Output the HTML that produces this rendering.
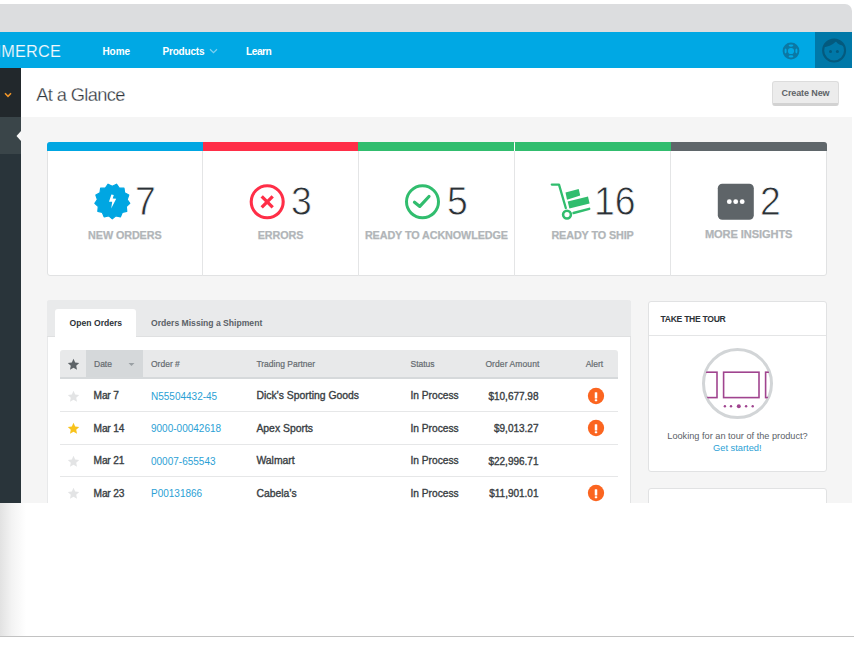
<!DOCTYPE html>
<html><head><meta charset="utf-8"><style>
html,body{margin:0;padding:0;background:#fff;}
body{width:854px;height:653px;position:relative;overflow:hidden;font-family:"Liberation Sans", sans-serif;}
</style></head><body>
<div style="position:absolute;left:0px;top:4px;width:852px;height:28px;background:#dcdddf;border-top-right-radius:7px;"></div>
<div style="position:absolute;left:0px;top:32px;width:852px;height:36px;background:#00a8e4;"></div>
<div style="position:absolute;left:815px;top:32px;width:37px;height:36px;background:#0078a8;"></div>
<div class="m" style="position:absolute;right:793px;text-align:right;top:42.90px;font-size:16.3px;line-height:16.3px;font-weight:400;color:#f0f9fd;white-space:nowrap;-webkit-text-stroke:0.15px #00a8e4;letter-spacing:0.2px;">COMMERCE</div>
<div class="m" style="position:absolute;left:102.5px;top:46.53px;font-size:10px;line-height:10px;font-weight:700;color:#ffffff;white-space:nowrap;letter-spacing:-0.1px;">Home</div>
<div class="m" style="position:absolute;left:162.5px;top:46.53px;font-size:10px;line-height:10px;font-weight:700;color:#ffffff;white-space:nowrap;letter-spacing:-0.2px;">Products</div>
<svg style="position:absolute;left:209px;top:48px" width="9" height="6" viewBox="0 0 9 6"><path d="M1 1.2 L4.5 4.6 L8 1.2" fill="none" stroke="#7fd0f0" stroke-width="1.2"/></svg>
<div class="m" style="position:absolute;left:246px;top:46.87px;font-size:10.2px;line-height:10.2px;font-weight:700;color:#ffffff;white-space:nowrap;letter-spacing:-0.5px;">Learn</div>
<svg style="position:absolute;left:781px;top:41px" width="20" height="20" viewBox="0 0 20 20"><circle cx="10" cy="10" r="8.4" fill="#0b78a4"/><circle cx="10" cy="10" r="3.1" fill="#00a8e4"/><g fill="#00a8e4"><ellipse cx="10" cy="4.6" rx="2.4" ry="1.05"/><ellipse cx="10" cy="15.4" rx="2.4" ry="1.05"/><ellipse cx="4.6" cy="10" rx="1.05" ry="2.4"/><ellipse cx="15.4" cy="10" rx="1.05" ry="2.4"/></g></svg>
<svg style="position:absolute;left:820px;top:37px" width="28" height="28" viewBox="0 0 28 28"><defs><clipPath id="av"><circle cx="14.1" cy="13.6" r="11"/></clipPath></defs><path d="M0 10.5 L2.6 10.5 C7 10 12 8.5 16 4.6 C18 7.5 21 9 26 9 L28 0 L0 0 Z" fill="#045a7e" clip-path="url(#av)"/><circle cx="14.1" cy="13.6" r="10.95" fill="none" stroke="#045a7e" stroke-width="2.1"/><circle cx="10.5" cy="14.4" r="1.5" fill="#045a7e"/><circle cx="17.4" cy="14.4" r="1.5" fill="#045a7e"/></svg>
<div style="position:absolute;left:0px;top:68px;width:20.5px;height:49px;background:#22282c;"></div>
<div style="position:absolute;left:0px;top:117px;width:20.5px;height:37px;background:#3a4549;"></div>
<div style="position:absolute;left:0px;top:154px;width:20.5px;height:349px;background:#29343a;"></div>
<svg style="position:absolute;left:4px;top:92px" width="8" height="6" viewBox="0 0 8 6"><path d="M1 1.3 L4 4.3 L7 1.3" fill="none" stroke="#f0962a" stroke-width="1.6"/></svg>
<svg style="position:absolute;left:15.5px;top:130.5px" width="5" height="10" viewBox="0 0 5 10"><path d="M5 0 L0.5 5 L5 10 Z" fill="#f8f8f8"/></svg>
<div style="position:absolute;left:20.5px;top:68px;width:831.5px;height:49px;background:#ffffff;"></div>
<div class="m" style="position:absolute;left:36.3px;top:85.71px;font-size:18.3px;line-height:18.3px;font-weight:400;color:#30363c;white-space:nowrap;letter-spacing:-0.65px;-webkit-text-stroke:0.3px #fff;">At a Glance</div>
<div style="position:absolute;left:772px;top:81px;width:67px;height:25px;background:#ececec;border:1px solid #dcdcdc;border-bottom:3px solid #d2d2d2;border-radius:3px;box-sizing:border-box;"></div>
<div class="m" style="position:absolute;left:781.5px;top:88.68px;font-size:9px;line-height:9px;font-weight:700;color:#5f6468;white-space:nowrap;letter-spacing:-0.1px;">Create New</div>
<div style="position:absolute;left:20.5px;top:117px;width:831.5px;height:386px;background:#f5f5f5;"></div>
<div style="position:absolute;left:47px;top:142px;width:779.8px;height:133.5px;background:#fff;border:1px solid #e1e2e3;border-radius:3px;box-sizing:border-box;"></div>
<div style="position:absolute;left:47px;top:142px;width:155.6px;height:9px;background:#00a6e2;border-top-left-radius:3px;"></div>
<div style="position:absolute;left:202.6px;top:142px;width:155.7px;height:9px;background:#ff2e47;"></div>
<div style="position:absolute;left:202px;top:151px;width:1px;height:124.5px;background:#e4e5e6;"></div>
<div style="position:absolute;left:358.3px;top:142px;width:156.2px;height:9px;background:#31bd6e;"></div>
<div style="position:absolute;left:358px;top:151px;width:1px;height:124.5px;background:#e4e5e6;"></div>
<div style="position:absolute;left:514.5px;top:142px;width:156.1px;height:9px;background:#31bd6e;"></div>
<div style="position:absolute;left:514px;top:151px;width:1px;height:124.5px;background:#e4e5e6;"></div>
<div style="position:absolute;left:670.6px;top:142px;width:156.2px;height:9px;background:#5f666a;border-top-right-radius:3px;"></div>
<div style="position:absolute;left:670px;top:151px;width:1px;height:124.5px;background:#e4e5e6;"></div>
<div class="m" style="position:absolute;left:-75.2px;width:400px;text-align:center;top:229.56px;font-size:10.8px;line-height:10.8px;font-weight:700;color:#b1b5b8;white-space:nowrap;letter-spacing:-0.1px;-webkit-text-stroke:0.25px #b1b5b8;">NEW ORDERS</div>
<div class="m" style="position:absolute;left:80.44999999999999px;width:400px;text-align:center;top:229.56px;font-size:10.8px;line-height:10.8px;font-weight:700;color:#b1b5b8;white-space:nowrap;letter-spacing:-0.1px;-webkit-text-stroke:0.25px #b1b5b8;">ERRORS</div>
<div class="m" style="position:absolute;left:236.39999999999998px;width:400px;text-align:center;top:229.56px;font-size:10.8px;line-height:10.8px;font-weight:700;color:#b1b5b8;white-space:nowrap;letter-spacing:-0.1px;-webkit-text-stroke:0.25px #b1b5b8;">READY TO ACKNOWLEDGE</div>
<div class="m" style="position:absolute;left:392.54999999999995px;width:400px;text-align:center;top:229.56px;font-size:10.8px;line-height:10.8px;font-weight:700;color:#b1b5b8;white-space:nowrap;letter-spacing:-0.1px;-webkit-text-stroke:0.25px #b1b5b8;">READY TO SHIP</div>
<div class="m" style="position:absolute;left:548.7px;width:400px;text-align:center;top:229.30px;font-size:11.1px;line-height:11.1px;font-weight:700;color:#b1b5b8;white-space:nowrap;letter-spacing:-0.1px;-webkit-text-stroke:0.25px #b1b5b8;">MORE INSIGHTS</div>
<div class="m" style="position:absolute;left:135.29999999999998px;top:180.47px;font-size:41.5px;line-height:41.5px;font-weight:400;color:#2b3136;white-space:nowrap;-webkit-text-stroke:0.8px #fff;transform:scaleX(0.9);transform-origin:0 0;">7</div>
<div class="m" style="position:absolute;left:291.40000000000003px;top:180.47px;font-size:41.5px;line-height:41.5px;font-weight:400;color:#2b3136;white-space:nowrap;-webkit-text-stroke:0.8px #fff;transform:scaleX(0.9);transform-origin:0 0;">3</div>
<div class="m" style="position:absolute;left:446.6px;top:180.47px;font-size:41.5px;line-height:41.5px;font-weight:400;color:#2b3136;white-space:nowrap;-webkit-text-stroke:0.8px #fff;transform:scaleX(0.9);transform-origin:0 0;">5</div>
<div class="m" style="position:absolute;left:594.4px;top:180.47px;font-size:41.5px;line-height:41.5px;font-weight:400;color:#2b3136;white-space:nowrap;-webkit-text-stroke:0.8px #fff;transform:scaleX(0.9);transform-origin:0 0;">16</div>
<div class="m" style="position:absolute;left:760.1px;top:180.47px;font-size:41.5px;line-height:41.5px;font-weight:400;color:#2b3136;white-space:nowrap;-webkit-text-stroke:0.8px #fff;transform:scaleX(0.9);transform-origin:0 0;">2</div>
<svg style="position:absolute;left:94px;top:183px" width="37" height="37" viewBox="0 0 37 37"><polygon points="18.30,35.90 14.71,32.86 10.12,33.88 8.35,29.53 3.82,28.30 4.27,23.62 0.83,20.42 3.41,16.49 1.84,12.06 5.96,9.78 6.63,5.13 11.33,5.02 14.09,1.21 18.30,3.30 22.51,1.21 25.27,5.02 29.97,5.13 30.64,9.78 34.76,12.06 33.19,16.49 35.77,20.42 32.33,23.62 32.78,28.30 28.25,29.53 26.48,33.88 21.89,32.86" fill="#00a6e2" stroke="#00a6e2" stroke-width="1.2" stroke-linejoin="round"/><path d="M17.4 11.6 L19.8 11.9 L18.7 15.6 L22.2 15.8 L17.2 25.4 L18.2 18.7 L15 18.7 Z" fill="#fff"/></svg>
<svg style="position:absolute;left:249px;top:184px" width="36" height="36" viewBox="0 0 36 36"><circle cx="18.2" cy="17.8" r="16" fill="none" stroke="#ff2e47" stroke-width="3.1"/><path d="M12.7 12.3 L23.7 23.3 M23.7 12.3 L12.7 23.3" stroke="#ff2e47" stroke-width="3.3" stroke-linecap="butt"/></svg>
<svg style="position:absolute;left:404px;top:184px" width="36" height="36" viewBox="0 0 36 36"><circle cx="18.5" cy="17.8" r="16" fill="none" stroke="#31bd6e" stroke-width="3"/><path d="M10.5 18.2 L15.8 22.4 L25 12.5" fill="none" stroke="#31bd6e" stroke-width="3.2" stroke-linecap="round" stroke-linejoin="round"/></svg>
<svg style="position:absolute;left:550px;top:183px" width="41" height="38" viewBox="0 0 41 38"><path d="M1.8 1.6 L9 1.6 L15.8 25" fill="none" stroke="#31bd6e" stroke-width="2.3" stroke-linecap="round" stroke-linejoin="round"/><circle cx="17" cy="31.6" r="3.9" fill="none" stroke="#31bd6e" stroke-width="2.6"/><path d="M23.5 30 L39.2 25.8" stroke="#31bd6e" stroke-width="2.4" stroke-linecap="round"/><polygon points="15.5,9.4 28.7,5.9 30.2,12.6 17,16.7" fill="#31bd6e"/><polygon points="17.7,18.4 38,13.6 39.6,20.6 19.4,25.5" fill="#31bd6e"/></svg>
<svg style="position:absolute;left:717px;top:183px" width="38" height="38" viewBox="0 0 38 38"><rect x="0.8" y="0.8" width="36" height="36" rx="4.5" fill="#5e6468"/><circle cx="12.3" cy="18.7" r="2.4" fill="#fff"/><circle cx="18.7" cy="18.7" r="2.4" fill="#fff"/><circle cx="25.2" cy="18.7" r="2.4" fill="#fff"/></svg>
<div style="position:absolute;left:47px;top:300px;width:584px;height:203px;background:#fff;border-left:1px solid #e8e9ea;border-right:1px solid #e2e3e4;box-sizing:border-box;border-top-left-radius:3px;border-top-right-radius:3px;"></div>
<div style="position:absolute;left:47px;top:300px;width:584px;height:37px;background:#e9eaeb;border-bottom:1px solid #dfe0e1;box-sizing:border-box;border-top-left-radius:3px;border-top-right-radius:3px;"></div>
<div style="position:absolute;left:55px;top:308.5px;width:80.5px;height:29px;background:#fff;border-top-left-radius:3px;border-top-right-radius:3px;"></div>
<div class="m" style="position:absolute;left:69.6px;top:319.32px;font-size:8.6px;line-height:8.6px;font-weight:700;color:#2d3338;white-space:nowrap;">Open Orders</div>
<div class="m" style="position:absolute;left:151px;top:319.32px;font-size:8.6px;line-height:8.6px;font-weight:700;color:#5b6167;white-space:nowrap;">Orders Missing a Shipment</div>
<div style="position:absolute;left:60px;top:350px;width:558px;height:29px;background:#e8e9ea;border-bottom:2px solid #d6d9db;box-sizing:border-box;border-top-left-radius:3px;border-top-right-radius:3px;"></div>
<div style="position:absolute;left:86px;top:350px;width:57px;height:27px;background:#d5d8da;"></div>
<svg style="position:absolute;left:67px;top:358px" width="13" height="13" viewBox="0 0 24 24"><path d="M12 1.5 L15.1 8.3 L22.5 9.1 L17 14.1 L18.5 21.5 L12 17.8 L5.5 21.5 L7 14.1 L1.5 9.1 L8.9 8.3 Z" fill="#5e6468"/></svg>
<svg style="position:absolute;left:128px;top:362px" width="7" height="5" viewBox="0 0 7 5"><path d="M0.5 1 L6.5 1 L3.5 4 Z" fill="#9aa0a4"/></svg>
<div class="m" style="position:absolute;left:94px;top:360.20px;font-size:8.5px;line-height:8.5px;font-weight:400;color:#656b70;white-space:nowrap;-webkit-text-stroke:0.2px #656b70;">Date</div>
<div class="m" style="position:absolute;left:151px;top:360.20px;font-size:8.5px;line-height:8.5px;font-weight:400;color:#656b70;white-space:nowrap;-webkit-text-stroke:0.2px #656b70;">Order #</div>
<div class="m" style="position:absolute;left:256.4px;top:360.20px;font-size:8.5px;line-height:8.5px;font-weight:400;color:#656b70;white-space:nowrap;-webkit-text-stroke:0.2px #656b70;">Trading Partner</div>
<div class="m" style="position:absolute;left:410.5px;top:360.20px;font-size:8.5px;line-height:8.5px;font-weight:400;color:#656b70;white-space:nowrap;-webkit-text-stroke:0.2px #656b70;">Status</div>
<div class="m" style="position:absolute;right:314.5px;text-align:right;top:360.20px;font-size:8.5px;line-height:8.5px;font-weight:400;color:#656b70;white-space:nowrap;letter-spacing:0.1px;-webkit-text-stroke:0.2px #656b70;">Order Amount</div>
<div class="m" style="position:absolute;left:585.7px;top:360.20px;font-size:8.5px;line-height:8.5px;font-weight:400;color:#656b70;white-space:nowrap;-webkit-text-stroke:0.2px #656b70;">Alert</div>
<svg style="position:absolute;left:67px;top:389.5px" width="13" height="13" viewBox="0 0 24 24"><path d="M12 1.5 L15.1 8.3 L22.5 9.1 L17 14.1 L18.5 21.5 L12 17.8 L5.5 21.5 L7 14.1 L1.5 9.1 L8.9 8.3 Z" fill="#e3e4e5"/></svg>
<div class="m" style="position:absolute;left:93.6px;top:391.37px;font-size:10.2px;line-height:10.2px;font-weight:400;color:#383d42;white-space:nowrap;-webkit-text-stroke:0.35px #3a3f44;letter-spacing:-0.2px;">Mar 7</div>
<div class="m" style="position:absolute;left:151px;top:391.54px;font-size:10px;line-height:10px;font-weight:400;color:#2b9fd5;white-space:nowrap;">N55504432-45</div>
<div class="m" style="position:absolute;left:256.4px;top:391.20px;font-size:10.4px;line-height:10.4px;font-weight:400;color:#383d42;white-space:nowrap;-webkit-text-stroke:0.35px #3a3f44;">Dick&#8217;s Sporting Goods</div>
<div class="m" style="position:absolute;left:410.5px;top:391.37px;font-size:10.2px;line-height:10.2px;font-weight:400;color:#383d42;white-space:nowrap;-webkit-text-stroke:0.35px #3a3f44;">In Process</div>
<div class="m" style="position:absolute;right:315.5px;text-align:right;top:391.54px;font-size:10px;line-height:10px;font-weight:400;color:#383d42;white-space:nowrap;-webkit-text-stroke:0.35px #3a3f44;">$10,677.98</div>
<svg style="position:absolute;left:587px;top:386.7px" width="18" height="18" viewBox="0 0 18 18"><circle cx="9" cy="9" r="8.15" fill="#fb6520"/><rect x="7.75" y="5.2" width="2.5" height="6.4" rx="0.6" fill="#fff"/><rect x="7.75" y="12.3" width="2.5" height="1.9" rx="0.6" fill="#fff"/></svg>
<div style="position:absolute;left:60px;top:411px;width:558px;height:1px;background:#e6e7e8;"></div>
<svg style="position:absolute;left:67px;top:421.9px" width="13" height="13" viewBox="0 0 24 24"><path d="M12 1.5 L15.1 8.3 L22.5 9.1 L17 14.1 L18.5 21.5 L12 17.8 L5.5 21.5 L7 14.1 L1.5 9.1 L8.9 8.3 Z" fill="#f8c31c"/></svg>
<div class="m" style="position:absolute;left:93.6px;top:423.77px;font-size:10.2px;line-height:10.2px;font-weight:400;color:#383d42;white-space:nowrap;-webkit-text-stroke:0.35px #3a3f44;letter-spacing:-0.2px;">Mar 14</div>
<div class="m" style="position:absolute;left:151px;top:423.94px;font-size:10px;line-height:10px;font-weight:400;color:#2b9fd5;white-space:nowrap;">9000-00042618</div>
<div class="m" style="position:absolute;left:256.4px;top:423.60px;font-size:10.4px;line-height:10.4px;font-weight:400;color:#383d42;white-space:nowrap;-webkit-text-stroke:0.35px #3a3f44;">Apex Sports</div>
<div class="m" style="position:absolute;left:410.5px;top:423.77px;font-size:10.2px;line-height:10.2px;font-weight:400;color:#383d42;white-space:nowrap;-webkit-text-stroke:0.35px #3a3f44;">In Process</div>
<div class="m" style="position:absolute;right:315.5px;text-align:right;top:423.94px;font-size:10px;line-height:10px;font-weight:400;color:#383d42;white-space:nowrap;-webkit-text-stroke:0.35px #3a3f44;">$9,013.27</div>
<svg style="position:absolute;left:587px;top:419.1px" width="18" height="18" viewBox="0 0 18 18"><circle cx="9" cy="9" r="8.15" fill="#fb6520"/><rect x="7.75" y="5.2" width="2.5" height="6.4" rx="0.6" fill="#fff"/><rect x="7.75" y="12.3" width="2.5" height="1.9" rx="0.6" fill="#fff"/></svg>
<div style="position:absolute;left:60px;top:444px;width:558px;height:1px;background:#e6e7e8;"></div>
<svg style="position:absolute;left:67px;top:454.5px" width="13" height="13" viewBox="0 0 24 24"><path d="M12 1.5 L15.1 8.3 L22.5 9.1 L17 14.1 L18.5 21.5 L12 17.8 L5.5 21.5 L7 14.1 L1.5 9.1 L8.9 8.3 Z" fill="#e3e4e5"/></svg>
<div class="m" style="position:absolute;left:93.6px;top:456.37px;font-size:10.2px;line-height:10.2px;font-weight:400;color:#383d42;white-space:nowrap;-webkit-text-stroke:0.35px #3a3f44;letter-spacing:-0.2px;">Mar 21</div>
<div class="m" style="position:absolute;left:151px;top:456.54px;font-size:10px;line-height:10px;font-weight:400;color:#2b9fd5;white-space:nowrap;">00007-655543</div>
<div class="m" style="position:absolute;left:256.4px;top:456.20px;font-size:10.4px;line-height:10.4px;font-weight:400;color:#383d42;white-space:nowrap;-webkit-text-stroke:0.35px #3a3f44;">Walmart</div>
<div class="m" style="position:absolute;left:410.5px;top:456.37px;font-size:10.2px;line-height:10.2px;font-weight:400;color:#383d42;white-space:nowrap;-webkit-text-stroke:0.35px #3a3f44;">In Process</div>
<div class="m" style="position:absolute;right:315.5px;text-align:right;top:456.54px;font-size:10px;line-height:10px;font-weight:400;color:#383d42;white-space:nowrap;-webkit-text-stroke:0.35px #3a3f44;">$22,996.71</div>
<div style="position:absolute;left:60px;top:476px;width:558px;height:1px;background:#e6e7e8;"></div>
<svg style="position:absolute;left:67px;top:486.8px" width="13" height="13" viewBox="0 0 24 24"><path d="M12 1.5 L15.1 8.3 L22.5 9.1 L17 14.1 L18.5 21.5 L12 17.8 L5.5 21.5 L7 14.1 L1.5 9.1 L8.9 8.3 Z" fill="#e3e4e5"/></svg>
<div class="m" style="position:absolute;left:93.6px;top:488.67px;font-size:10.2px;line-height:10.2px;font-weight:400;color:#383d42;white-space:nowrap;-webkit-text-stroke:0.35px #3a3f44;letter-spacing:-0.2px;">Mar 23</div>
<div class="m" style="position:absolute;left:151px;top:488.84px;font-size:10px;line-height:10px;font-weight:400;color:#2b9fd5;white-space:nowrap;">P00131866</div>
<div class="m" style="position:absolute;left:256.4px;top:488.50px;font-size:10.4px;line-height:10.4px;font-weight:400;color:#383d42;white-space:nowrap;-webkit-text-stroke:0.35px #3a3f44;">Cabela&#8217;s</div>
<div class="m" style="position:absolute;left:410.5px;top:488.67px;font-size:10.2px;line-height:10.2px;font-weight:400;color:#383d42;white-space:nowrap;-webkit-text-stroke:0.35px #3a3f44;">In Process</div>
<div class="m" style="position:absolute;right:315.5px;text-align:right;top:488.84px;font-size:10px;line-height:10px;font-weight:400;color:#383d42;white-space:nowrap;-webkit-text-stroke:0.35px #3a3f44;">$11,901.01</div>
<svg style="position:absolute;left:587px;top:484.0px" width="18" height="18" viewBox="0 0 18 18"><circle cx="9" cy="9" r="8.15" fill="#fb6520"/><rect x="7.75" y="5.2" width="2.5" height="6.4" rx="0.6" fill="#fff"/><rect x="7.75" y="12.3" width="2.5" height="1.9" rx="0.6" fill="#fff"/></svg>
<div style="position:absolute;left:648px;top:300.5px;width:178.5px;height:171.5px;background:#fff;border:1px solid #e1e2e3;border-radius:3px;box-sizing:border-box;"></div>
<div style="position:absolute;left:649px;top:335px;width:176.5px;height:1px;background:#e4e5e6;"></div>
<div class="m" style="position:absolute;left:660.5px;top:314.62px;font-size:8.6px;line-height:8.6px;font-weight:700;color:#2d3338;white-space:nowrap;letter-spacing:-0.3px;">TAKE THE TOUR</div>
<svg style="position:absolute;left:700px;top:346px" width="76" height="76" viewBox="0 0 76 76"><defs><clipPath id="cc"><circle cx="37.5" cy="37.6" r="33.5"/></clipPath></defs><circle cx="37.5" cy="37.6" r="34" fill="#fff" stroke="#d2d5d7" stroke-width="3"/><g clip-path="url(#cc)" fill="none" stroke="#a0448f" stroke-width="1.6"><rect x="23.6" y="26.2" width="35.4" height="25.4"/><rect x="-10" y="26.2" width="27" height="25.4"/><rect x="65.6" y="26.2" width="27" height="25.4"/></g><g fill="#a0448f"><circle cx="24.9" cy="60.2" r="1.2"/><circle cx="31" cy="60.2" r="1.2"/><circle cx="38.8" cy="60.2" r="2"/><circle cx="46.1" cy="60.2" r="1.2"/><circle cx="52.7" cy="60.2" r="1.2"/></g></svg>
<div class="m" style="position:absolute;left:537.5px;width:400px;text-align:center;top:431.61px;font-size:9.2px;line-height:9.2px;font-weight:400;color:#5b6167;white-space:nowrap;">Looking for an tour of the product?</div>
<div class="m" style="position:absolute;left:537.3px;width:400px;text-align:center;top:443.73px;font-size:9.3px;line-height:9.3px;font-weight:400;color:#2b9fd5;white-space:nowrap;">Get started!</div>
<div style="position:absolute;left:648px;top:488px;width:178.5px;height:30px;background:#fff;border:1px solid #e1e2e3;border-radius:3px;box-sizing:border-box;"></div>
<div style="position:absolute;left:0px;top:503px;width:854px;height:150px;background:#fff;"></div>
<div style="position:absolute;left:0px;top:503px;width:26px;height:133px;background:linear-gradient(to right,#e2e2e2,#f3f3f3 45%,#ffffff);"></div>
<div style="position:absolute;left:0px;top:636px;width:854px;height:1px;background:#c2c2c2;"></div>
</body></html>
